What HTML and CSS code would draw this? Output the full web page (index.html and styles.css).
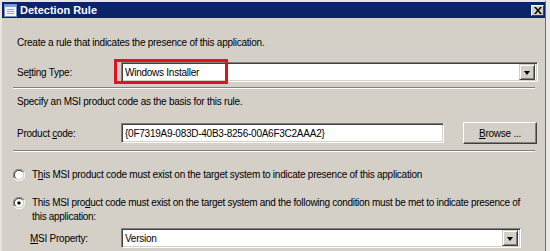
FILE: index.html
```html
<!DOCTYPE html>
<html>
<head>
<meta charset="utf-8">
<link rel="stylesheet" href="styles.css">
</head>
<body>
<div class="window">
  <div class="titlebar">
    <svg class="ticon" width="13" height="13" viewBox="0 0 13 13">
      <rect x="0.5" y="0.5" width="12" height="12" fill="#f4f6fb" stroke="#6f8fc2"/>
      <rect x="1" y="1" width="11" height="2" fill="#7fa0d8"/>
      <rect x="3" y="5" width="7" height="1" fill="#8da6cf"/>
      <rect x="3" y="7" width="7" height="1" fill="#8da6cf"/>
      <rect x="3" y="9" width="7" height="1" fill="#8da6cf"/>
    </svg>
    <span class="title">Detection Rule</span>
    <div class="close">
      <svg width="8" height="7" viewBox="0 0 8 7">
        <path d="M0 0h2l2 2.5L6 0h2L5 3.5 8 7H6L4 4.5 2 7H0l3-3.5z" fill="#000"/>
      </svg>
    </div>
  </div>
  <div class="content">
    <p class="line intro">Create a rule that indicates the presence of this application.</p>
    <div class="row setting">
      <span class="label">Se<u>t</u>ting Type:</span>
      <div class="combo wide">
        <span class="value">Windows Installer</span>
        <div class="arrow"><span class="tri"></span></div>
      </div>
      <div class="highlight"></div>
    </div>
    <div class="sep"></div>
    <p class="line specify">Specify an MSI product code as the basis for this rule.</p>
    <div class="row product">
      <span class="label">Product <u>c</u>ode:</span>
      <div class="textbox"><span class="value">{0F7319A9-083D-40B3-8256-00A6F3C2AAA2}</span></div>
      <div class="button"><u>B</u>rowse ...</div>
    </div>
    <div class="sep sep2"></div>
    <div class="radio-row r1">
      <svg class="radio" width="12" height="12" viewBox="0 0 12 12">
        <path d="M11 3 A5.5 5.5 0 0 0 1 9" fill="none" stroke="#808080"/>
        <path d="M1 9 A5.5 5.5 0 0 0 11 3" fill="none" stroke="#ffffff"/>
        <circle cx="6" cy="6" r="4.5" fill="#fff" stroke="#d4d0c8"/>
        <path d="M9.3 2.7 A4.5 4.5 0 0 0 2.7 9.3" fill="none" stroke="#404040"/>
      </svg>
      <span class="rtext">T<u>h</u>is MSI product code must exist on the target system to indicate presence of this application</span>
    </div>
    <div class="radio-row r2">
      <svg class="radio" width="12" height="12" viewBox="0 0 12 12">
        <path d="M11 3 A5.5 5.5 0 0 0 1 9" fill="none" stroke="#808080"/>
        <path d="M1 9 A5.5 5.5 0 0 0 11 3" fill="none" stroke="#ffffff"/>
        <circle cx="6" cy="6" r="4.5" fill="#fff" stroke="#d4d0c8"/>
        <path d="M9.3 2.7 A4.5 4.5 0 0 0 2.7 9.3" fill="none" stroke="#404040"/>
        <rect x="4.5" y="4.5" width="3" height="3" rx="0.8" fill="#000"/>
      </svg>
      <span class="rtext">This MSI pro<u>d</u>uct code must exist on the target system and the following condition must be met to indicate presence of<br>this application:</span>
    </div>
    <div class="row msi">
      <span class="label"><u>M</u>SI Property:</span>
      <div class="combo narrow">
        <span class="value">Version</span>
        <div class="arrow"><span class="tri"></span></div>
      </div>
    </div>
  </div>
</div>
</body>
</html>
```
FILE: styles.css
```css
html, body {
  margin: 0;
  padding: 0;
}
body {
  background: #ebe9e4;
  font-family: "Liberation Sans", Arial, sans-serif;
  font-size: 10px;
  letter-spacing: -0.25px;
  color: #000;
  width: 550px;
  height: 251px;
  overflow: hidden;
}
.window {
  box-sizing: border-box;
  width: 546px;
  height: 251px;
  background: #d4d0c8;
  border-top: 2px solid #e6e4df;
  border-left: 2px solid #e6e4df;
  border-right: 1px solid #6e6c68;
}
.titlebar {
  height: 16px;
  background: #0a246a;
  display: flex;
  align-items: center;
}
.ticon {
  margin-left: 2px;
  flex: none;
}
.title {
  color: #fff;
  font-weight: bold;
  font-size: 11px;
  letter-spacing: 0;
  margin-left: 3px;
}
.close {
  margin-left: auto;
  margin-right: 1px;
  width: 13px;
  height: 11px;
  box-sizing: border-box;
  background: #d4d0c8;
  border-top: 1px solid #fff;
  border-left: 1px solid #fff;
  border-right: 1px solid #404040;
  border-bottom: 1px solid #404040;
  display: flex;
  align-items: center;
  justify-content: center;
}
.content {
  padding-left: 15px;
}
.line {
  margin: 0;
  line-height: 13px;
  height: 13px;
}
.intro {
  margin-top: 18px;
}
.row {
  display: flex;
  align-items: center;
  position: relative;
}
.label {
  width: 104px;
  flex: none;
  line-height: 13px;
}
.setting {
  margin-top: 13px;
  height: 20px;
}
.combo, .textbox {
  box-sizing: border-box;
  height: 20px;
  background: #fff;
  border-top: 1px solid #808080;
  border-left: 1px solid #808080;
  border-right: 1px solid #fff;
  border-bottom: 1px solid #fff;
  box-shadow: inset 1px 1px 0 #404040, inset -1px -1px 0 #d4d0c8;
  display: flex;
  align-items: center;
  padding: 0 2px 0 3px;
}
.combo.wide { width: 417px; }
.combo.narrow { width: 400px; }
.value {
  flex: 1;
  white-space: nowrap;
  overflow: hidden;
}
.arrow {
  box-sizing: border-box;
  width: 16px;
  height: 16px;
  background: #d4d0c8;
  border-top: 1px solid #d4d0c8;
  border-left: 1px solid #d4d0c8;
  border-right: 1px solid #404040;
  border-bottom: 1px solid #404040;
  box-shadow: inset 1px 1px 0 #fff, inset -1px -1px 0 #808080;
  display: flex;
  align-items: center;
  justify-content: center;
  flex: none;
}
.tri {
  width: 0;
  height: 0;
  border-left: 3.5px solid transparent;
  border-right: 3.5px solid transparent;
  border-top: 4px solid #000;
  margin-top: 1px;
}
.highlight {
  position: absolute;
  left: 97px;
  top: -3px;
  width: 114px;
  height: 25px;
  box-sizing: border-box;
  border: 3px solid #e0141c;
}
.sep {
  height: 0;
  margin-left: -4px;
  width: 522px;
  border-top: 1px solid #808080;
  border-bottom: 1px solid #fff;
  margin-top: 5px;
}
.specify {
  margin-top: 6px;
}
.product {
  margin-top: 14px;
  height: 22px;
}
.textbox {
  width: 323px;
}
.button {
  box-sizing: border-box;
  margin-left: 19px;
  width: 74px;
  height: 22px;
  background: #d4d0c8;
  border-top: 1px solid #fff;
  border-left: 1px solid #fff;
  border-right: 1px solid #404040;
  border-bottom: 1px solid #404040;
  box-shadow: inset -1px -1px 0 #808080;
  display: flex;
  align-items: center;
  justify-content: center;
}
.sep2 {
  margin-top: 6px;
}
.radio-row {
  display: flex;
  align-items: flex-start;
  margin-left: -4px;
}
.radio {
  flex: none;
  margin-top: 1px;
}
.rtext {
  margin-left: 7px;
  line-height: 13px;
}
.r1 {
  margin-top: 16px;
}
.r2 {
  margin-top: 15px;
}
.r2 .rtext {
  line-height: 14px;
  letter-spacing: -0.3px;
  white-space: nowrap;
}
.msi {
  margin-top: 4px;
  height: 20px;
}
.msi .label {
  padding-left: 13px;
  width: 91px;
}
```
